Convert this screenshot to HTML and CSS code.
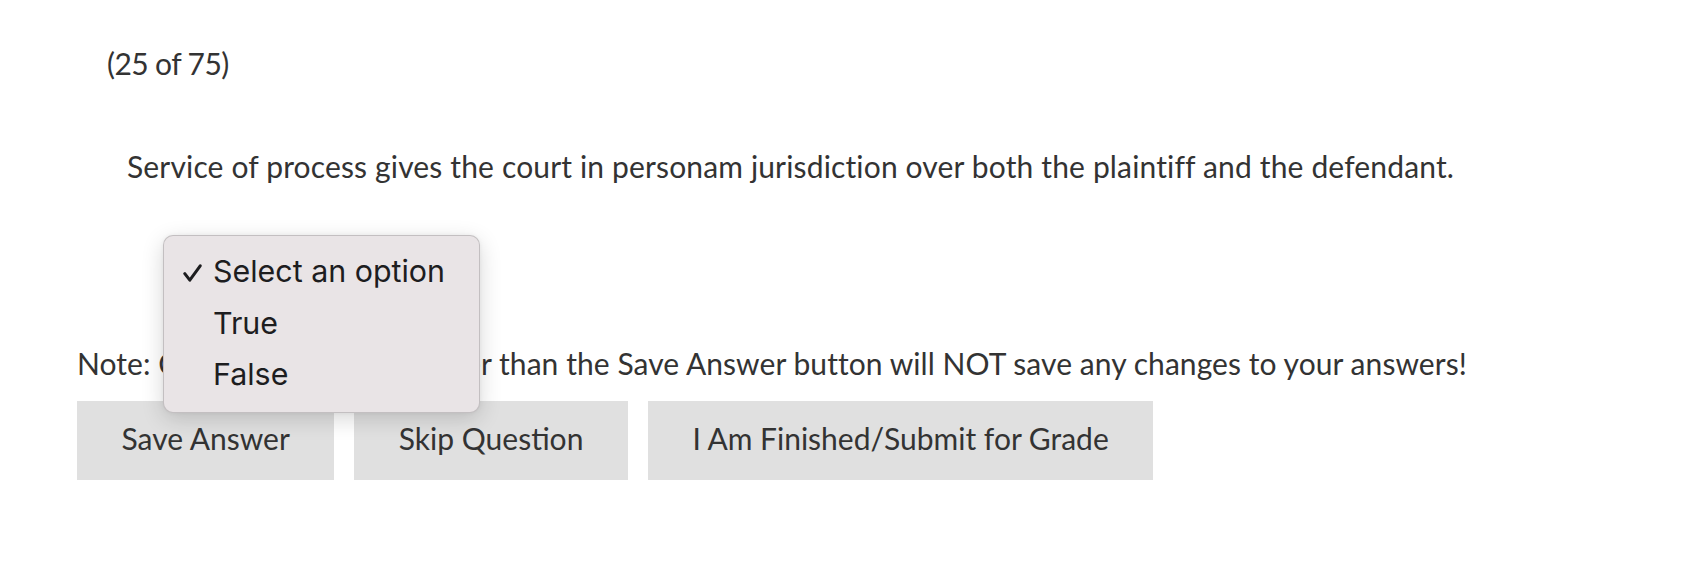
FILE: index.html
```html
<!DOCTYPE html>
<html lang="en">
<head>
<meta charset="utf-8">
<title>Question 25 of 75</title>
<link rel="stylesheet" href="styles.css">
</head>
<body>
<main class="page">
  <p class="counter">(25 of 75)</p>
  <p class="question">Service of process gives the court in personam jurisdiction over both the plaintiff and the defendant.</p>
  <div class="answer">
    <select class="answer-select" aria-label="Answer">
      <option selected>Select an option</option>
      <option>True</option>
      <option>False</option>
    </select>
    <ul class="menu" role="listbox">
      <li class="menu-item is-selected"><svg class="check" width="19" height="18" viewBox="0 0 19 18" aria-hidden="true"><path d="M1.8 9.6 L6.8 16.2 L17.2 1.8" fill="none" stroke="#1d1d1f" stroke-width="3" stroke-linecap="round" stroke-linejoin="round"/></svg>Select an option</li>
      <li class="menu-item">True</li>
      <li class="menu-item">False</li>
    </ul>
  </div>
  <p class="note">Note: Clicking any button other than the Save Answer button will NOT save any changes to your answers!</p>
  <div class="buttons">
    <button class="btn" type="button">Save Answer</button>
    <button class="btn" type="button">Skip Question</button>
    <button class="btn" type="button">I Am Finished/Submit for Grade</button>
  </div>
</main>
</body>
</html>
```
FILE: styles.css
```css
html, body {
  margin: 0;
  background: #ffffff;
}

body {
  font-family: "Lato", "Open Sans", sans-serif;
  font-size: 30px;
  line-height: 36px;
  color: #333333;
}

.page {
  padding: 45px 0 0 77px;
}

.counter {
  margin: 0 0 67px 30px;
  letter-spacing: -0.6px;
}

.question {
  margin: 0 0 0 50px;
  letter-spacing: 0.15px;
}

.answer {
  position: relative;
  padding: 66px 0 55px 113px;
}

.answer-select {
  display: block;
  width: 250px;
  height: 40px;
  font: inherit;
  font-size: 22px;
  color: #333333;
  background: #f3f3f3;
  border: 1px solid #cccccc;
}

.menu {
  position: absolute;
  left: 86px;
  top: 51px;
  width: 315px;
  margin: 0;
  padding: 10px 0 11px;
  list-style: none;
  background: #e9e4e6;
  border: 1px solid rgba(0, 0, 0, 0.16);
  border-radius: 10px;
  box-shadow: 0 6px 22px rgba(0, 0, 0, 0.16), 0 0 4px rgba(0, 0, 0, 0.05);
  font-family: "Inter", "Noto Sans", sans-serif;
  font-size: 30.4px;
  line-height: 51.5px;
  color: #1d1d1f;
  z-index: 2;
}

.menu-item {
  padding-left: 49px;
  white-space: nowrap;
}

.menu-item.is-selected {
  padding-left: 19px;
}

.check {
  margin-right: 11px;
  vertical-align: baseline;
}

.note {
  margin: 0 0 20px;
  letter-spacing: 0.06px;
}

.buttons {
  display: flex;
  gap: 20px;
}

.btn {
  font: inherit;
  color: #333333;
  background: #e0e0e0;
  border: 0;
  border-radius: 0;
  padding: 19px 44.5px 24px;
  height: 79px;
  cursor: pointer;
}
```
